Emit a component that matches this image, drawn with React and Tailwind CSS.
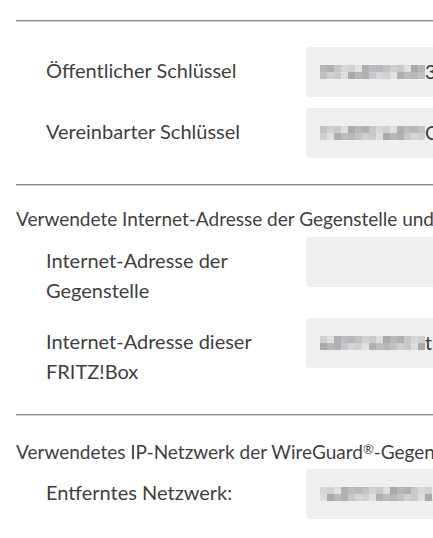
import React from "react";

const grays = [
  "bg-[#c9c9c9]", "bg-[#b8b8b8]", "bg-[#d6d6d6]", "bg-[#aab0b6]", "bg-[#c2c2c2]",
  "bg-[#dedede]", "bg-[#b0b0b0]", "bg-[#cdd0d4]", "bg-[#bcbcbc]", "bg-[#d2cfcc]",
  "bg-[#a9a9a9]", "bg-[#c6c9cc]", "bg-[#e0e0e0]", "bg-[#b4b8bc]",
];

const BlurredValue = ({ seed, count, tail }) => {
  const row = (offset) =>
    Array.from({ length: count }, (_, i) => (
      <span key={i} className={`w-[7px] h-[7px] ${grays[(i * 5 + seed + offset) % grays.length]}`} />
    ));
  return (
    <div className="flex items-center h-full pl-[14px]">
      <div className="flex flex-col">
        <div className="flex">{row(0)}</div>
        <div className="flex">{row(3)}</div>
      </div>
      {tail && <span className="text-[#3c3c3c] text-[19.5px]">{tail}</span>}
    </div>
  );
};

const Row = ({ label, value }) => (
  <div className="flex items-start mb-[11px]">
    <div className="w-[290px] pl-[30px] pt-[8px] pb-[2px] shrink-0 text-[20px]">{label}</div>
    <div className="w-[300px] h-[50px] rounded-[4px] bg-[#efefef] shrink-0">{value}</div>
  </div>
);

const Divider = () => <div className="border-t border-[#8c8c8c] border-b-[1px] border-b-[#d4d4d4]" />;

export default function App() {
  return (
    <div
      className="w-[433px] h-[538px] overflow-hidden bg-white text-[19px] leading-[30px] text-[#3f3f3f]"
      style={{ fontFamily: "Lato, 'Noto Sans', sans-serif" }}
    >
      <div className="w-[760px] pl-4 pt-5">
        <Divider />
        <div className="pt-[25px] pb-[15px]">
          <Row label="Öffentlicher Schlüssel" value={<BlurredValue seed={1} count={15} tail="3N" />} />
          <Row label="Vereinbarter Schlüssel" value={<BlurredValue seed={4} count={15} tail="C" />} />
        </div>
        <Divider />
        <div className="pt-[18px] pb-[15px]">
          <div className="mb-[3px] whitespace-nowrap">Verwendete Internet-Adresse der Gegenstelle und dieser FRITZ!Box</div>
          <Row
            label={<>Internet-Adresse der<br />Gegenstelle</>}
            value={null}
          />
          <Row
            label={<>Internet-Adresse dieser<br />FRITZ!Box</>}
            value={<BlurredValue seed={7} count={15} tail="th" />}
          />
        </div>
        <Divider />
        <div className="pt-[18px]">
          <div className="mb-[2px] whitespace-nowrap">
            Verwendetes IP-Netzwerk der WireGuard<span className="text-[13px] align-[5px]">®</span>-Gegenstelle
          </div>
          <Row label="Entferntes Netzwerk:" value={<BlurredValue seed={2} count={16} tail="2" />} />
        </div>
      </div>
    </div>
  );
}
